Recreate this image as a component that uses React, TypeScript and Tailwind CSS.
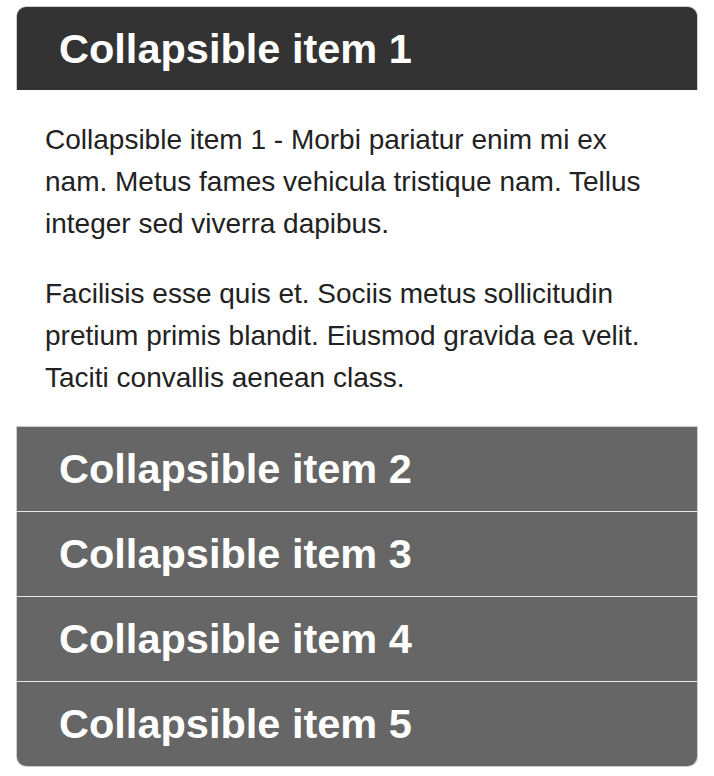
const ITEMS = [
  "Collapsible item 2",
  "Collapsible item 3",
  "Collapsible item 4",
  "Collapsible item 5",
];

export default function App() {
  return (
    <div className="min-h-screen bg-white pt-[6px] px-4 font-['Liberation_Sans',Arial,sans-serif]">
      <div className="w-[682px] rounded-[10px] overflow-hidden">
        {/* Open item */}
        <div className="h-[84px] bg-[#333333] border border-b-0 border-[#cfcfcf] rounded-t-[10px] flex items-center pl-[42px] text-white text-[41.5px] font-bold leading-none">
          Collapsible item 1
        </div>
        <div className="bg-white pt-[29px] pb-[27px] pl-[29px] pr-[30px] text-[28px] leading-[42px] text-[#222]">
          <p>
            Collapsible item 1 - Morbi pariatur enim mi ex nam. Metus fames vehicula tristique nam. Tellus integer sed
            viverra dapibus.
          </p>
          <p className="mt-[28px]">
            Facilisis esse quis et. Sociis metus sollicitudin pretium primis blandit. Eiusmod gravida ea velit. Taciti
            convallis aenean class.
          </p>
        </div>

        {/* Closed items */}
        <div className="rounded-b-[10px] overflow-hidden border-x border-b border-[#cfcfcf] shadow-[0_1px_3px_rgba(0,0,0,0.25)]">
          {ITEMS.map((label, i) => (
            <div
              key={label}
              className={
                "h-[85px] bg-[#666666] flex items-center pl-[42px] text-white text-[41.5px] font-bold leading-none " +
                (i === 0 ? "border-t border-[#cfcfcf]" : "border-t border-[#e6e6e6]")
              }
            >
              {label}
            </div>
          ))}
        </div>
      </div>
    </div>
  );
}
